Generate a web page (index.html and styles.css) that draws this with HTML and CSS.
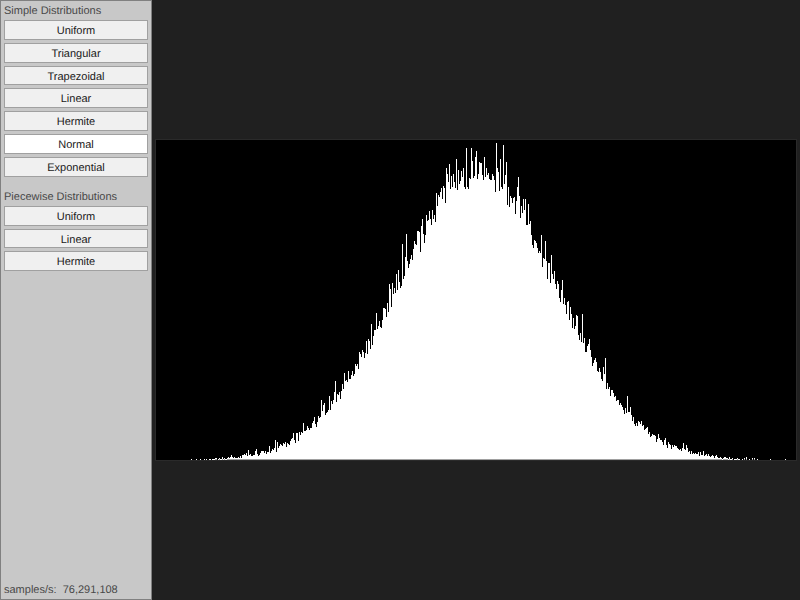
FILE: index.html
```html
<html>
<head>
    <title>Distributions</title>
    <link rel="stylesheet" href="styles.css">
</head>
<body>
    <div class="sidebar">
        <div class="group">
            <div class="group-title">Simple Distributions</div>
            <button>Uniform</button>
            <button>Triangular</button>
            <button>Trapezoidal</button>
            <button>Linear</button>
            <button>Hermite</button>
            <button class="selected">Normal</button>
            <button>Exponential</button>
        </div>
        <div class="group">
            <div class="group-title">Piecewise Distributions</div>
            <button>Uniform</button>
            <button>Linear</button>
            <button>Hermite</button>
        </div>
        <div class="stats">samples/s:&nbsp; 76,291,108</div>
    </div>
    <div class="main">
        <canvas id="histogram" width="640" height="320"></canvas>
    </div>
    <script src="script.js"></script>
</body>
</html>
```

FILE: styles.css
```css
body {
    font-family: "Liberation Sans", Arial, sans-serif;
    font-size: 11px;
    text-rendering: geometricPrecision;
    display: flex;
    height: 100vh;
    margin: 0;
    overflow: hidden;
    background-color: #202020;
}

.sidebar {
    display: flex;
    flex-direction: column;
    gap: 14.2px;
    box-sizing: border-box;
    width: 152px;
    height: 100%;
    padding: 4px 3px 3px;
    background-color: #c8c8c8;
    border: 1px solid #808080;
    /* keeps the text on plain grey antialiasing */
    opacity: 0.999;
}

.group {
    display: flex;
    flex-direction: column;
    gap: 3px;
}

.group-title {
    height: 12px;
    line-height: 13px;
    color: #484848;
}

button {
    box-sizing: border-box;
    height: 19.8px;
    padding: 2.3px 0 0;
    font-family: inherit;
    font-size: 11px;
    text-rendering: inherit;
    color: #202020;
    background-color: #f0f0f0;
    border: 1px solid #a0a0a0;
    border-radius: 0;
}

button.selected {
    background-color: #fff;
}

.stats {
    margin-top: auto;
    color: #484848;
}

.main {
    flex: 1;
    display: flex;
    justify-content: center;
    align-items: center;
}

#histogram {
    display: block;
    background-color: #000;
    border: 1px solid #2a2a2a;
}
```

FILE: script.js
```js
const canvas = document.getElementById('histogram');
const ctx = canvas.getContext('2d');

// Small seeded generator so the picture is the same on every load
let seed = 76291108;
function random() {
    seed = (seed * 1664525 + 1013904223) % 4294967296;
    return seed / 4294967296;
}

for (let x = 0; x < canvas.width; x++) {
    const d = (x - 320) / 80;
    const mean = 287 * Math.exp(-d * d / 2);
    // Noise grows with the square root of the height, with some tall spikes
    let noise = (random() + random() - 1) * Math.sqrt(mean) * 1.1;
    if (random() < 0.2) noise += random() * Math.sqrt(mean) * 2.2;
    const height = Math.floor(mean + noise);
    if (height <= 0) continue;
    ctx.fillStyle = '#fff';
    ctx.fillRect(x, canvas.height - height, 1, height);
    // The bottom row of each column is dimmer
    if (height > 1) {
        ctx.fillStyle = '#a0a0a0';
        ctx.fillRect(x, canvas.height - 1, 1, 1);
    }
}
```
